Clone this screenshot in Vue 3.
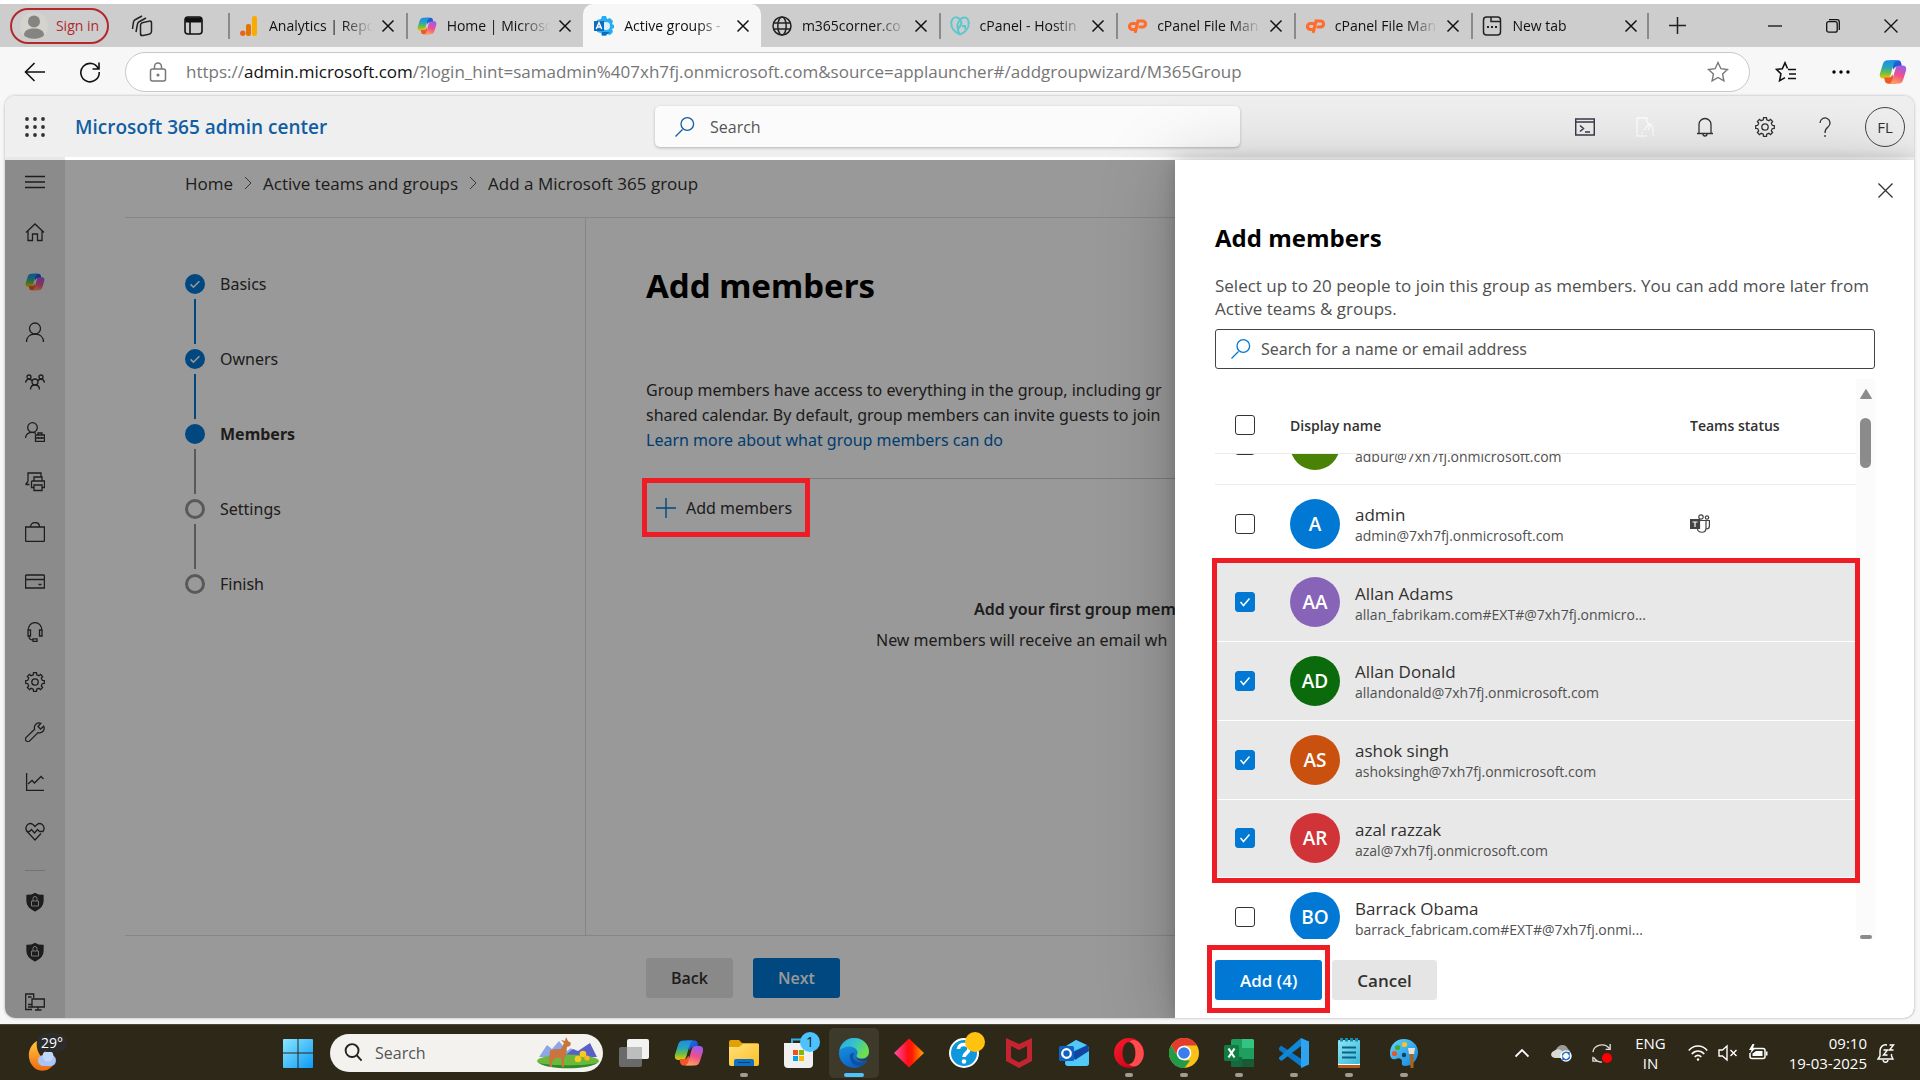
<script setup>
import { ref, onMounted } from 'vue'

const tabs = [
  { title: 'Analytics | Repo', icon: 'analytics' },
  { title: 'Home | Microso', icon: 'copilot' },
  { title: 'Active groups -', icon: 'admin', active: true },
  { title: 'm365corner.co', icon: 'globe' },
  { title: 'cPanel - Hostin', icon: 'godaddy' },
  { title: 'cPanel File Man', icon: 'cpanel' },
  { title: 'cPanel File Man', icon: 'cpanel' },
  { title: 'New tab', icon: 'newtab' }
]

// outline of a cog, drawn tooth by tooth in a 20x20 box
function gearPath(teeth, outer, inner) {
  const points = []
  const step = (Math.PI * 2) / teeth
  for (let i = 0; i < teeth; i++) {
    const a = i * step
    const corners = [[-0.3, inner], [-0.2, outer], [0.2, outer], [0.3, inner]]
    corners.forEach(([offset, r]) => {
      const t = a + offset * step
      points.push((10 + r * Math.sin(t)).toFixed(2) + ' ' + (10 - r * Math.cos(t)).toFixed(2))
    })
  }
  return 'M' + points.join('L') + 'Z'
}

const gear = `<path d="${gearPath(8, 9.4, 7.4)}"/><circle cx="10" cy="10" r="3.2"/>`
const shield = '<path fill="currentColor" d="M10 1.5C12 3 15 3.500 18 3.500V9c0 4.500-3 7.500-8 9.800C5 16.500 2 13.500 2 9V3.500C5 3.500 8 3 10 1.500Z"/><path stroke="#c8c8c8" stroke-width="1" d="M6.500 9h7v5h-7zM8 9V6.500a2 2 0 0 1 4 0V9"/>'

const navItems = [
  { name: 'Menu', svg: '<path d="M0 4.500h20M0 10h20M0 15.500h20"/>' },
  { name: 'Home', svg: '<path d="M1 10.500 10 2l9 8.500M3 9v9.500h4.500V12h5v6.500H17V9"/>' },
  { name: 'Copilot', svg: '<use href="#ic-copilot" width="20" height="20" stroke="none"/>' },
  { name: 'Users', svg: '<circle cx="10" cy="6.500" r="5.500"/><path d="M1.500 20c0-5 3.500-8 8.500-8s8.500 3 8.500 8"/>' },
  { name: 'Teams and groups', svg: '<circle cx="4" cy="5" r="2"/><circle cx="16" cy="5" r="2"/><circle cx="10" cy="10" r="3"/><path d="M.500 10.500C1 8.500 2 7 4 7c1.500 0 2.500 1 3 2M19.500 10.500C19 8.500 18 7 16 7c-1.500 0-2.500 1-3 2M5.500 17.500c0-3 2-4.500 4.500-4.500s4.500 1.500 4.500 4.500"/>' },
  { name: 'Roles', svg: '<circle cx="7.500" cy="5.500" r="4.800"/><path d="M.500 16c.300-3.500 3-5.700 7-5.700 1.500 0 2.500.500 3.500 1M10.500 13h9v6.500h-9zM13 13v-2h4v2M10.500 16h9M13.500 15v2M16.500 15v2"/>' },
  { name: 'Resources', svg: '<path d="M3 9.500V1h13v4M.500 12.500h4M.500 12.500 3 9.500M9 9V5h8v4M6.500 9h13v6.500h-2.500M6.500 9v6.500H9M9 13h8v5.500H9z"/>' },
  { name: 'Marketplace', svg: '<path d="M.600 5h18.800v13.500a1 1 0 0 1-1 1H1.600a1 1 0 0 1-1-1zM5.500 5C5.500-1 14.500-1 14.500 5"/>' },
  { name: 'Billing', svg: '<path d="M.600 4a1 1 0 0 1 1-1h16.800a1 1 0 0 1 1 1v12H.600zM.600 7.500h18.800M13.500 12.500h3"/>' },
  { name: 'Support', svg: '<path d="M3 9c0-5 3-8.400 7-8.400S17 4 17 9M3 8h2.500v6H3zM14.500 8H17v6h-2.500zM4 14c0 3 1.500 4 4 4M8 16.800h4v2.600H8z"/>' },
  { name: 'Settings', svg: gear },
  { name: 'Setup', svg: '<path d="M18.700 4.200 15.500 7l-2.500-2.500L15.800 1.300C12 0 8.500 3 9.600 7.200L1.200 15.400a2.400 2.400 0 0 0 3.500 3.500l8.300-8.300c4.200 1 7.300-2.600 5.700-6.400Z"/>' },
  { name: 'Reports', svg: '<path d="M1.600 1v17.400H19M3 12l4-3.500 2.500 2.500 6.500-6.500 2.500 2.500"/>' },
  { name: 'Health', svg: '<path d="M2 9.500C-1 5 3.500-.500 8 2.500l2 2 2-2c4.500-3 9 2.500 6 7h-3.500l-2-2-3 3.500-3-3.500-2 2H2l8 8.500 6-6.500"/>' },
  { name: 'Security', svg: shield, separated: true },
  { name: 'Compliance', svg: shield },
  { name: 'Endpoint Manager', svg: '<path d="M7 17.500H.700V2h8v4M3 5h3.500M3 12.500h4M3 15h4M7 7h12.300v8H7zM10 18h6.500M13 15v3"/>' }
]

const steps = [
  { label: 'Basics', state: 'done' },
  { label: 'Owners', state: 'done' },
  { label: 'Members', state: 'current' },
  { label: 'Settings', state: 'todo' },
  { label: 'Finish', state: 'todo' }
]

const groups = ref([
  {
    people: [
      { id: 'adbur', initials: '', name: '', email: 'adbur@7xh7fj.onmicrosoft.com', color: 'green', checked: false },
      { id: 'admin', initials: 'A', name: 'admin', email: 'admin@7xh7fj.onmicrosoft.com', color: 'blue', checked: false, teams: true }
    ]
  },
  {
    marked: true,
    people: [
      { id: 'aa', initials: 'AA', name: 'Allan Adams', email: 'allan_fabrikam.com#EXT#@7xh7fj.onmicro...', color: 'purple', checked: true },
      { id: 'ad', initials: 'AD', name: 'Allan Donald', email: 'allandonald@7xh7fj.onmicrosoft.com', color: 'forest', checked: true },
      { id: 'as', initials: 'AS', name: 'ashok singh', email: 'ashoksingh@7xh7fj.onmicrosoft.com', color: 'orange', checked: true },
      { id: 'ar', initials: 'AR', name: 'azal razzak', email: 'azal@7xh7fj.onmicrosoft.com', color: 'red', checked: true }
    ]
  },
  {
    people: [
      { id: 'bo', initials: 'BO', name: 'Barrack Obama', email: 'barrack_fabricam.com#EXT#@7xh7fj.onmi...', color: 'blue', checked: false }
    ]
  }
])

const apps = [
  { name: 'Task view', icon: 'taskview' },
  { name: 'Copilot', icon: 'copilot' },
  { name: 'File Explorer', icon: 'folder', running: true },
  { name: 'Microsoft Store', icon: 'store', badge: '1' },
  { name: 'Edge', icon: 'edge', active: true },
  { name: 'Anydesk', icon: 'diamond' },
  { name: 'Get Help', icon: 'help', dot: true },
  { name: 'McAfee', icon: 'mcafee' },
  { name: 'Outlook', icon: 'outlook' },
  { name: 'Opera', icon: 'opera', running: true },
  { name: 'Chrome', icon: 'chrome', running: true },
  { name: 'Excel', icon: 'excel', running: true },
  { name: 'VS Code', icon: 'vscode', running: true },
  { name: 'Notepad', icon: 'notepad', running: true },
  { name: 'Paint', icon: 'paint', running: true }
]

const scroller = ref(null)

onMounted(() => {
  scroller.value.scrollTop = 48
})
</script>

<template>
  <svg class="sprite" aria-hidden="true">
    <defs>
      <linearGradient id="g-cop1" x1="0" y1="0" x2="0" y2="1">
        <stop offset="0" stop-color="#1a8fe8" /><stop offset=".4" stop-color="#2aa5b5" /><stop offset=".7" stop-color="#6fbf3f" /><stop offset="1" stop-color="#f5c400" />
      </linearGradient>
      <linearGradient id="g-cop2" x1=".6" y1="0" x2=".3" y2="1">
        <stop offset="0" stop-color="#9a5cf0" /><stop offset=".5" stop-color="#ee4f8c" /><stop offset="1" stop-color="#ffa15c" />
      </linearGradient>
      <linearGradient id="g-cop3" x1="0" y1="0" x2="1" y2="1">
        <stop offset="0" stop-color="#1f7be8" /><stop offset="1" stop-color="#1c3fc4" />
      </linearGradient>
      <linearGradient id="g-win" x1="0" y1="0" x2="1" y2="1">
        <stop offset="0" stop-color="#8be6ff" /><stop offset="1" stop-color="#0c9bf5" />
      </linearGradient>
      <linearGradient id="g-moon" x1="0" y1="0" x2="0" y2="1">
        <stop offset="0" stop-color="#ffc93c" /><stop offset="1" stop-color="#ee6a12" />
      </linearGradient>
      <linearGradient id="g-fold" x1="0" y1="0" x2="1" y2="1">
        <stop offset="0" stop-color="#ffe07a" /><stop offset="1" stop-color="#fdbf26" />
      </linearGradient>
      <linearGradient id="g-edge" x1="0" y1="0" x2="1" y2=".5">
        <stop offset="0" stop-color="#2aa6e8" /><stop offset=".5" stop-color="#35c3c9" /><stop offset="1" stop-color="#6fe04a" />
      </linearGradient>
      <linearGradient id="g-edge2" x1="0" y1="0" x2=".4" y2="1">
        <stop offset="0" stop-color="#1aa0e8" /><stop offset="1" stop-color="#0c62c4" />
      </linearGradient>
      <linearGradient id="g-dia">
        <stop offset="0" stop-color="#ff4fb0" /><stop offset=".45" stop-color="#ff0f1c" /><stop offset=".6" stop-color="#ff1a00" /><stop offset="1" stop-color="#ffa800" />
      </linearGradient>
      <linearGradient id="g-note" x1="0" y1="0" x2="1" y2="1">
        <stop offset="0" stop-color="#8fe4f5" /><stop offset="1" stop-color="#3bb8d8" />
      </linearGradient>
      <linearGradient id="g-paint" x1="0" y1="0" x2="1" y2="1">
        <stop offset="0" stop-color="#63d3ff" /><stop offset="1" stop-color="#1184dc" />
      </linearGradient>
      <linearGradient id="g-opera" x1="0" y1="0" x2="1" y2="1">
        <stop offset="0" stop-color="#ff1b2d" /><stop offset="1" stop-color="#b80012" />
      </linearGradient>
    </defs>

    <symbol id="ic-copilot" viewBox="0 0 30 30">
      <path fill="url(#g-cop3)" d="M12 2.500h8.500c2 0 2.800 1.300 3.300 3L24.500 9H20c-2.500 0-3.500 1-4.300 3.500Z" />
      <path fill="url(#g-cop1)" d="M9.500 2.500H19c-2 .500-2.700 2-3.400 4.500L12.500 18c-.800 2.800-2 4-4.500 4H4.500C1 22 .300 19 1.200 16L4 7c1-3.200 2.500-4.500 5.500-4.500Z" />
      <path fill="#f0582c" d="M18 27.500H9.500c-2 0-2.800-1.300-3.300-3L5.500 21H10c2.500 0 3.500-1 4.300-3.500Z" />
      <path fill="url(#g-cop2)" d="M20.500 27.500H11c2-.500 2.700-2 3.400-4.500L17.500 12c.800-2.800 2-4 4.500-4h3.500C29 8 29.700 11 28.800 14L26 23c-1 3.200-2.500 4.500-5.500 4.500Z" />
    </symbol>
    <symbol id="ic-analytics" viewBox="0 0 18 20">
      <rect x="12" width="5" height="20" rx="2" fill="#f9ab00" /><rect x="6" y="8" width="5" height="12" rx="2" fill="#e37400" /><circle cx="2.800" cy="17.200" r="2.700" fill="#e8661c" />
    </symbol>
    <symbol id="ic-admin" viewBox="0 0 20 20">
      <path fill="#27aef0" d="M8 0h4l1 3 3-1 3 3-1 3 2 1v3l-2 1 1 3-3 3-3-1-1 2H8l-1-3-4-1V4l4-1Z" />
      <circle cx="12" cy="10" r="4" fill="#d8f2ff" />
      <path fill="#0f6cbd" d="M8 16h8l-4 3H8zM0 5h10v10H0z" />
      <path fill="none" stroke="#fff" stroke-width="1.400" d="m2.300 13 2.700-6.500L7.700 13M3.300 11h3.400" />
    </symbol>
    <symbol id="ic-globe" viewBox="0 0 20 20">
      <g fill="none" stroke="#222" stroke-width="1.500"><circle cx="10" cy="10" r="9" /><ellipse cx="10" cy="10" rx="4.200" ry="9" /><path d="M1.500 7h17M1.500 13h17" /></g>
    </symbol>
    <symbol id="ic-godaddy" viewBox="0 0 20 20">
      <g fill="none" stroke="#5cc8cd" stroke-width="2"><path d="M10 18.500C4 16 .500 11 1.500 5.500 2.500 0 8 .500 10.500 4c2 3-.500 7-2.500 9M10 18.500c6-2.500 9.500-7.500 8.500-13C17.500 0 12 .500 9 5c-3 5-2 9 1 13.500M12 10h3v3" /></g>
    </symbol>
    <symbol id="ic-cpanel" viewBox="0 0 20 14">
      <g fill="none" stroke="#ff6c2c" stroke-width="3.200" stroke-linecap="round"><path d="M8 4.500H5.500a3 3 0 0 0 0 6H7M8.500 12.500 11 2h4.500a3 3 0 0 1 0 6H13" /></g>
    </symbol>
    <symbol id="ic-newtab" viewBox="0 0 20 20">
      <g fill="none" stroke="#222" stroke-width="1.500"><rect x="1.500" y="1" width="17" height="18" rx="3" /><path d="M9 1v4.500h9" /></g>
      <path fill="#222" d="M5 10h2v2H5zM9 10h2v2H9zM13 10h2v2h-2z" />
    </symbol>

    <symbol id="ic-taskview" viewBox="0 0 30 30">
      <rect x="0" y="9" width="23" height="20" rx="2" fill="#6a6a6a" /><rect x="8" y="1" width="22" height="20" rx="2" fill="#f2f2f2" /><path fill="#bdbdbd" d="M8 9h15v12H8z" />
    </symbol>
    <symbol id="ic-folder" viewBox="0 0 30 30">
      <path fill="#e0a106" d="M0 4a2 2 0 0 1 2-2h8l3 3h15a2 2 0 0 1 2 2v6H0z" /><path fill="url(#g-fold)" d="M0 9h10l4-3h16v20a2 2 0 0 1-2 2H2a2 2 0 0 1-2-2z" />
      <path fill="#0f6fc0" d="M5 28v-5a2 2 0 0 1 2-2h16a2 2 0 0 1 2 2v5z" /><path stroke="#0a3f78" d="M9 24.500h12" />
    </symbol>
    <symbol id="ic-store" viewBox="0 0 30 30">
      <path fill="none" stroke="#2ab4ee" stroke-width="2" d="M8 7V1.500h13V7" /><path fill="#f0f0f0" d="M0 5h29v21a4 4 0 0 1-4 4H4a4 4 0 0 1-4-4z" />
      <path fill="#f25022" d="M9 12h5v5H9z" /><path fill="#7fba00" d="M15 12h5v5h-5z" /><path fill="#00a4ef" d="M9 18h5v5H9z" /><path fill="#ffb900" d="M15 18h5v5h-5z" />
    </symbol>
    <symbol id="ic-edge" viewBox="0 0 30 30">
      <circle cx="15" cy="15" r="15" fill="url(#g-edge2)" />
      <path fill="url(#g-edge)" d="M.500 12C2 5 8 0 15 0c8.500 0 15 6 15 13.500 0 4-3 7-7 7-3 0-5.500-1-5.500-2.500 0-1 1-1.500 1-3.500 0-3.500-4-6-8-6-4 0-8 2-10 3.500Z" />
      <path fill="#0e4f9e" d="M11 17c-1 7 5 12 11 11 2-.500 5-3 6-5-6 3-14 1-14-4.500 0-2 1-3 1.500-3.500-2 0-4 .500-4.500 2Z" />
      <path fill="#3d392b" d="M30 17c-1.500 3-4 4.500-7.500 4.500-3.500 0-5.500-1.500-5.500-3.500 0 4 5 6.500 11 4.500l2-1ZM29 22.500l1 1V30h-7c3-1 5-4 6-7.500Z" />
    </symbol>
    <symbol id="ic-diamond" viewBox="0 0 30 30"><path fill="url(#g-dia)" d="M15 0.500 30 15 15 29.500 0 15Z" /></symbol>
    <symbol id="ic-help" viewBox="0 0 30 30">
      <circle cx="15" cy="15" r="14" fill="#0e97dc" stroke="#fff" stroke-width="2" />
      <path fill="none" stroke="#fff" stroke-width="3.600" d="M9.500 11c0-6 10.500-6 10.500 0 0 4-5 4-5 8" /><circle cx="15" cy="23.500" r="2.300" fill="#fff" />
    </symbol>
    <symbol id="ic-mcafee" viewBox="0 0 30 30"><path fill="#c42430" fill-rule="evenodd" d="M2 0 15 6 28 0v23l-13 7-13-7zM7 8v12l8 4.500 8-4.500V8l-8 4z" /></symbol>
    <symbol id="ic-outlook" viewBox="0 0 30 30">
      <path fill="#1a86dc" d="M6 9 17 2l13 7v16a3 3 0 0 1-3 3H9a3 3 0 0 1-3-3z" /><path fill="#51c8f7" d="M17 2 7 8l6 6 15-7zM6 24l24-12v13a3 3 0 0 1-3 3H9c-2 0-3-2-3-4z" /><path fill="#1146a0" d="m12 15 17-8 1 6-14 9z" />
      <rect y="8" width="15" height="15" rx="1.500" fill="#0f62c0" /><circle cx="7.500" cy="15.500" r="4.300" fill="none" stroke="#fff" stroke-width="2.200" />
    </symbol>
    <symbol id="ic-opera" viewBox="0 0 30 30">
      <path fill="url(#g-opera)" fill-rule="evenodd" d="M15 0a15 15 0 1 0 0 30 15 15 0 0 0 0-30ZM15 4c4 0 6.500 5 6.500 11S19 26 15 26 8.500 21 8.500 15 11 4 15 4Z" />
      <path fill="#ff4b4b" d="M15 4c3-3 6-2.500 9-.500 7 6 8 16 1 23-3 2.500-7 3-10-.500 4 0 6.500-5 6.500-11S19 4 15 4Z" />
    </symbol>
    <symbol id="ic-chrome" viewBox="0 0 30 30">
      <circle cx="15" cy="15" r="15" fill="#fbc116" /><path fill="#e33b2e" d="M2 7.500A15 15 0 0 1 28 7.500H15L9 18Z" /><path fill="#23994a" d="M2 7.500 9 18.500 15 22.500h6L15.500 30A15 15 0 0 1 2 7.500Z" />
      <circle cx="15" cy="15" r="7.300" fill="#fff" /><circle cx="15" cy="15" r="5.800" fill="#3b7ded" />
    </symbol>
    <symbol id="ic-excel" viewBox="0 0 30 30">
      <rect x="7" y="1" width="23" height="28" rx="2" fill="#1f9f5e" /><path fill="#34c481" d="M18 1h10a2 2 0 0 1 2 2v7H18z" /><path fill="#15693c" d="M7 19h11v10H9a2 2 0 0 1-2-2z" /><path fill="#185c37" d="M18 21h12v6a2 2 0 0 1-2 2H18z" />
      <rect y="7" width="15" height="16" rx="1.500" fill="#107c41" /><path stroke="#fff" stroke-width="2.200" d="m4.500 10.500 6 9M10.500 10.500l-6 9" />
    </symbol>
    <symbol id="ic-vscode" viewBox="0 0 30 30">
      <path fill="#0b78c8" d="M0 10 2 7.500 24 22v8L0 12z" /><path fill="#1187d8" d="M0 19.500 22 0v8L2.500 23 0 21z" /><path fill="#2ea3f2" d="M22 0 30 3.500v23L22 30z" />
    </symbol>
    <symbol id="ic-notepad" viewBox="0 0 30 30">
      <rect x="4" y="24" width="22" height="6" rx="1" fill="#b5591c" /><path fill="#fff" d="M4 24h22v3H4z" /><rect x="4" y="2" width="22" height="24" rx="1" fill="url(#g-note)" /><path stroke="#0b6286" stroke-width="2" d="M8 9.500h14M8 14.500h14M8 19.500h14" />
      <path fill="#0f8fb4" d="M6 0h3v3.500H6zM11 0h3v3.500h-3zM16 0h3v3.500h-3zM21 0h3v3.500h-3z" />
    </symbol>
    <symbol id="ic-paint" viewBox="0 0 30 30">
      <path fill="url(#g-paint)" d="M15 1c8 0 14 6 14 13 0 8-6 14-13 14-4 0-3-3-3-5s-3-4-6-2c-3 1-6 0-6-6C1 7 7 1 15 1Z" />
      <circle cx="5.500" cy="15.500" r="2.600" fill="#e5562a" /><circle cx="8.500" cy="9.500" r="2.600" fill="#3fae29" /><circle cx="15.500" cy="6.500" r="2.600" fill="#f7c51e" /><circle cx="15" cy="17" r="2.200" fill="#12405e" />
      <path fill="#e9e2d2" d="M19 10h7l-1 6h-5z" /><path fill="#a9641a" d="M20.500 16h4v14h-3z" />
    </symbol>
    <symbol id="ic-search" viewBox="0 0 20 20"><path fill="none" stroke="currentColor" stroke-width="1.300" d="M7.500 12.500.500 19.500M6 7a6.300 6.300 0 1 1 12.600 0A6.300 6.300 0 1 1 6 7Z" /></symbol>
    <symbol id="ic-close" viewBox="0 0 16 16"><path fill="none" stroke="currentColor" stroke-width="1.500" d="m2.500 2.500 11 11m0-11-11 11" /></symbol>
  </svg>

  <div class="desktop">
    <div class="tab-strip">
      <button class="sign-in">
        <svg viewBox="0 0 28 28"><circle cx="14" cy="14" r="14" fill="#d5d3ce" /><circle cx="14" cy="9.500" r="6" fill="#868480" /><path fill="#868480" d="M4 23c0-5 5-6.500 10-6.500S24 18 24 23c-3 5-17 5-20 0Z" /></svg>
        Sign in
      </button>
      <button class="strip-btn" aria-label="Workspaces">
        <svg viewBox="0 0 22 22" fill="none" stroke="#222" stroke-width="1.500"><path d="M1.500 14 2.500 7c.200-1 1-2 2-2.500L11 1M5 17 6.500 9c.200-1 1-2 2-2.500L15 3" /><rect x="9.500" y="6" width="11" height="13" rx="2.500" transform="skewY(-12) translate(0 4)" /></svg>
      </button>
      <button class="strip-btn" aria-label="Tab actions">
        <svg viewBox="0 0 22 22" fill="none" stroke="#111" stroke-width="1.600"><rect x="2" y="2" width="17" height="17" rx="3" /><path d="M2.500 5h16" stroke-width="5" /><path d="M7 7v12" /></svg>
      </button>
      <div class="tabs">
        <div v-for="(tab, index) in tabs" :key="index" :class="['tab', { active: tab.active }]">
          <svg class="tab-icon"><use :href="'#ic-' + tab.icon" /></svg>
          <span class="tab-title">{{ tab.title }}</span>
          <button class="tab-close" aria-label="Close tab"><svg><use href="#ic-close" /></svg></button>
        </div>
      </div>
      <button class="new-tab" aria-label="New tab">
        <svg viewBox="0 0 18 18" stroke="#222" stroke-width="1.600"><path d="M9 0v18M0 9h18" /></svg>
      </button>
      <div class="window-controls">
        <button aria-label="Minimize"><svg viewBox="0 0 14 14" stroke="#111" stroke-width="1.300"><path d="M0 7h14" /></svg></button>
        <button aria-label="Restore"><svg viewBox="0 0 14 14" fill="none" stroke="#111" stroke-width="1.300"><rect x=".700" y="2.700" width="10.500" height="10.500" rx="2" /><path d="M3 .700h8a2.300 2.300 0 0 1 2.300 2.300v8" /></svg></button>
        <button aria-label="Close"><svg viewBox="0 0 14 14" stroke="#111" stroke-width="1.300"><path d="m.500.500 13 13m0-13-13 13" /></svg></button>
      </div>
    </div>

    <div class="toolbar">
      <button aria-label="Back"><svg viewBox="0 0 22 22" fill="none" stroke="#111" stroke-width="1.600"><path d="M21 11H2M10.500 2 1.500 11l9 9" /></svg></button>
      <button aria-label="Refresh"><svg viewBox="0 0 22 22" fill="none" stroke="#111" stroke-width="1.600"><path d="M19.500 8A9.200 9.200 0 1 0 20.200 11M20 1.500v6.500h-6.500" /></svg></button>
      <div class="address">
        <svg viewBox="0 0 18 20" fill="none" stroke="#777" stroke-width="1.500"><rect x="1.500" y="7" width="15" height="12" rx="2" /><path d="M5.500 7V4.500a3.500 3.500 0 0 1 7 0V7" /><circle cx="9" cy="13" r=".800" fill="#777" /></svg>
        <span class="url">https://<b>admin.microsoft.com</b>/?login_hint=samadmin%407xh7fj.onmicrosoft.com&amp;source=applauncher#/addgroupwizard/M365Group</span>
        <svg class="star" viewBox="0 0 22 22" fill="none" stroke="#777" stroke-width="1.400"><path d="m11 1.500 2.900 6.200 6.600.800-4.900 4.600 1.300 6.700L11 16.500l-5.900 3.300 1.300-6.700L1.500 8.500l6.600-.800Z" /></svg>
      </div>
      <button class="tool" aria-label="Favorites"><svg viewBox="0 0 22 22" fill="none" stroke="#111" stroke-width="1.600"><path d="M12.500 7.500 10 1.800 7.300 7.800 1.500 8.300l4.400 4.500-1.300 6.800 5.400-3M13 8.500h8M14 13h7M13 17.500h8" /></svg></button>
      <button class="tool" aria-label="More"><svg viewBox="0 0 22 22"><circle cx="4" cy="11" r="1.700" /><circle cx="11" cy="11" r="1.700" /><circle cx="18" cy="11" r="1.700" /></svg></button>
      <button class="tool-copilot" aria-label="Copilot"><svg><use href="#ic-copilot" /></svg></button>
    </div>

    <div class="site">
      <header class="suite-bar">
        <button class="waffle" aria-label="App launcher">
          <svg viewBox="0 0 20 20" fill="#333"><g v-for="row in 3" :key="row"><circle v-for="col in 3" :key="col" :cx="col * 8 - 6" :cy="row * 8 - 6" r="1.900" /></g></svg>
        </button>
        <a class="brand" href="#">Microsoft 365 admin center</a>
        <label class="suite-search">
          <svg><use href="#ic-search" /></svg>
          <input type="text" placeholder="Search" aria-label="Search">
        </label>
        <div class="suite-icons">
          <button aria-label="Cloud shell"><svg viewBox="0 0 20 20" fill="none" stroke="#3b3a4a" stroke-width="1.500"><path d="M.700 2h18.600v16H.700zM.700 5h18.600M5 8.500l3.500 3L5 14.500M10 15h5" /></svg></button>
          <button aria-label="Mobile"><svg viewBox="0 0 20 20" fill="none" stroke="#fff" stroke-width="1.300"><path d="M12 6V1H2v18h10M6 16h2M12 6c4 0 6 4 6 7v6M9 13l5-6 1 2-2 4" /></svg></button>
          <button aria-label="Notifications"><svg viewBox="0 0 20 20" fill="none" stroke="#333" stroke-width="1.300"><path d="M4 16V7.500a6 6 0 0 1 12 0V16M2 16.500h16M8 17a2 2 0 0 0 4 0" /></svg></button>
          <button aria-label="Settings"><svg viewBox="0 0 20 20" fill="none" stroke="#333" stroke-width="1.300" v-html="gear"></svg></button>
          <button aria-label="Help"><svg viewBox="0 0 20 20" fill="none" stroke="#333" stroke-width="1.300"><path d="M5 6a5 5 0 1 1 8 4c-2 1.500-3 2.500-3 6" /><path d="M10 18v2" /></svg></button>
          <button class="me" aria-label="Account">FL</button>
        </div>
      </header>

      <div class="page">
        <nav class="side-nav">
          <template v-for="item in navItems" :key="item.name">
            <div v-if="item.separated" class="nav-separator"></div>
            <a href="#" :aria-label="item.name"><svg viewBox="0 0 20 20" fill="none" stroke="currentColor" stroke-width="1.300" v-html="item.svg"></svg></a>
          </template>
        </nav>

        <main class="wizard">
          <div class="crumbs">
            <a href="#">Home</a>
            <svg viewBox="0 0 8 14"><path d="m1 1 6 6-6 6" /></svg>
            <a href="#">Active teams and groups</a>
            <svg viewBox="0 0 8 14"><path d="m1 1 6 6-6 6" /></svg>
            <a href="#">Add a Microsoft 365 group</a>
          </div>
          <div class="wizard-body">
            <ol class="steps">
              <li v-for="step in steps" :key="step.label" :class="step.state">
                <span class="bullet"><svg v-if="step.state === 'done'" viewBox="0 0 20 20"><path d="m4.500 10.500 3.500 3.500 7.500-7.500" /></svg></span>
                {{ step.label }}
              </li>
            </ol>
            <section class="content">
              <h1>Add members</h1>
              <p class="intro">
                Group members have access to everything in the group, including gr<br>
                shared calendar. By default, group members can invite guests to join<br>
                <a href="#">Learn more about what group members can do</a>
              </p>
              <div class="command-bar">
                <button class="add-command marked">
                  <svg viewBox="0 0 20 20"><path d="M10 0v20M0 10h20" /></svg>
                  Add members
                </button>
              </div>
              <div class="empty">
                <strong>Add your first group mem</strong>
                <span>New members will receive an email wh</span>
              </div>
            </section>
          </div>
          <div class="wizard-footer">
            <button>Back</button>
            <button class="primary">Next</button>
          </div>
        </main>
        <div class="overlay"></div>

        <aside class="panel">
          <button class="panel-close" aria-label="Close panel"><svg viewBox="0 0 16 16"><path d="m.500.500 15 15m0-15-15 15" /></svg></button>
          <h2>Add members</h2>
          <p>Select up to 20 people to join this group as members. You can add more later from Active teams &amp; groups.</p>
          <label class="people-search">
            <svg><use href="#ic-search" /></svg>
            <input type="text" placeholder="Search for a name or email address" aria-label="Search for a name or email address">
          </label>
          <div class="list">
            <div class="rail">
              <svg viewBox="0 0 12 10"><path d="M6 0.500 11.500 9.500H.500Z" stroke="#8b8b8b" stroke-linejoin="round" /></svg>
              <div class="thumb"></div>
              <div class="rail-end"></div>
            </div>
            <div ref="scroller" class="scroller">
              <table>
                <thead>
                  <tr>
                    <th class="col-check"><input type="checkbox" aria-label="Select all"></th>
                    <th class="col-name">Display name</th>
                    <th>Teams status</th>
                  </tr>
                </thead>
                <tbody v-for="(group, index) in groups" :key="index" :class="{ marked: group.marked }">
                  <tr v-for="person in group.people" :key="person.id" :class="{ selected: person.checked }">
                    <td class="col-check"><input v-model="person.checked" type="checkbox" :aria-label="person.email"></td>
                    <td>
                      <div class="person">
                        <span :class="['avatar', person.color]">{{ person.initials }}</span>
                        <div>
                          <div class="name">{{ person.name }}</div>
                          <div class="email">{{ person.email }}</div>
                        </div>
                      </div>
                    </td>
                    <td>
                      <svg v-if="person.teams" class="teams" viewBox="0 0 20 20" fill="none" stroke="#444" stroke-width="1.200"><circle cx="11" cy="3" r="2.200" /><circle cx="17" cy="3.500" r="1.700" /><path d="M10 6.500h6V14c0 6-8 5-8.500 1M16 6.500h3.400V12c0 2-1.500 3-3 3" /><path fill="#444" d="M.500 5.500h9v9h-9z" /><path stroke="#fff" d="M2.500 8h5M5 8v5" /></svg>
                    </td>
                  </tr>
                </tbody>
              </table>
            </div>
          </div>
          <div class="panel-footer">
            <button class="add marked">Add (4)</button>
            <button>Cancel</button>
          </div>
        </aside>
      </div>
    </div>

    <footer class="taskbar">
      <div class="weather">
        <svg viewBox="0 0 40 44">
          <path fill="url(#g-moon)" d="M9 10C-3 17-1 34 10 39c6 2 13 0 16-7C14 31 7 20 9 10Z" />
          <rect x="10" y="24" width="18" height="11" rx="5.500" fill="#a9c4f5" /><circle cx="20" cy="25" r="5.500" fill="#c3d6fb" />
        </svg>
        <span>29°</span>
      </div>
      <button class="start" aria-label="Start"><svg viewBox="0 0 30 30" fill="url(#g-win)"><path d="M0 2a1 1 0 0 1 1-1h13.500v13.500H0zM15.500 1H29a1 1 0 0 1 1 1v12.500H15.500zM0 15.500h14.500V30H1a1 1 0 0 1-1-1zM15.500 15.500H30V29a1 1 0 0 1-1 1H15.500z" /></svg></button>
      <label class="task-search">
        <svg viewBox="0 0 20 20" fill="none" stroke="#222" stroke-width="2"><circle cx="8.500" cy="8" r="6.800" /><path d="m13.500 13 5 5.500" /></svg>
        <input type="text" placeholder="Search" aria-label="Taskbar search">
        <svg class="scene" viewBox="0 0 62 32">
          <path fill="#8ea6e6" d="M2 20 10 8l5 4 7-8 8 10 4-3 8 9z" /><path fill="#5a5fc8" d="M26 20 36 12l5 2 12-8 7 14z" />
          <ellipse cx="31" cy="24" rx="31" ry="6.500" fill="#6cb83a" /><path fill="#2f8a2a" d="M2 26c8 7 50 7 58 0-10 3-48 3-58 0Z" />
          <path fill="#c9753f" d="M13 14c2-2 8-2 11-2l3-6-3-3 4 1 1-4 2 4 3 2-1 3-3 1-1 8-2 3v9h-2l-1-9h-5l-4 4v5h-2l-1-8Z" />
          <circle cx="46" cy="17" r="3.300" fill="#f9cb1e" /><circle cx="41" cy="22" r="3.300" fill="#f9cb1e" /><circle cx="50" cy="21" r="2.600" fill="#ffb51e" />
        </svg>
      </label>
      <div class="apps">
        <button v-for="app in apps" :key="app.name" :class="['app', { running: app.running, active: app.active }]" :aria-label="app.name">
          <svg><use :href="'#ic-' + app.icon" /></svg>
          <span v-if="app.badge || app.dot" class="badge">{{ app.badge }}</span>
        </button>
      </div>
      <div class="tray">
        <svg class="w14" viewBox="0 0 14 14" fill="none" stroke="#fff" stroke-width="1.800"><path d="m.500 10.500 6.500-6.500 6.500 6.500" /></svg>
        <svg class="w22" viewBox="0 0 22 18"><path fill="#9b9b97" d="M5 6C7 0 15-1 17 5c2 1 3 3 2 6H5z" /><path fill="#d9d9d5" d="M3 7c3-3 8-2 9 2 3 0 4 4 1 5H4C-1 14-1 8 3 7Z" /><circle cx="15" cy="12" r="5.700" fill="#fff" /><path fill="none" stroke="#1a6fd0" stroke-width="1.500" d="M11.500 11.500a3.500 3.500 0 0 1 6.500-1.500V8M18.500 12.500A3.500 3.500 0 0 1 12 14v2" /></svg>
        <svg class="w22" viewBox="0 0 22 22" fill="none" stroke="#ddd" stroke-width="1.500"><path d="M1 10C2 2 14-1 19 6M20 1v6h-5M6 20H1v-5M2 16c2 3 5 5 9 5" /><circle cx="16.500" cy="16.500" r="5.500" fill="#f00" stroke="none" /></svg>
        <div class="lang">ENG<br>IN</div>
        <svg class="w20" viewBox="0 0 20 18" fill="none" stroke="#fff" stroke-width="1.600"><path d="M.800 6.500c5-6 13.400-6 18.400 0M3.800 10c3.500-4 8.900-4 12.400 0M6.700 13c2-2.200 4.600-2.200 6.600 0" /><circle cx="10" cy="15.500" r="1.200" fill="#fff" stroke="none" /></svg>
        <svg class="w20" viewBox="0 0 20 18" fill="none" stroke="#fff" stroke-width="1.400"><path d="M1 6h3.500L9 2v14l-4.500-4H1zM12.500 6l6 6m0-6-6 6" /></svg>
        <svg class="w20" viewBox="0 0 20 18" fill="none" stroke="#fff" stroke-width="1.500"><path d="M5 4.500h10a2 2 0 0 1 2 2v6a2 2 0 0 1-2 2H4a2 2 0 0 1-2-2V9" /><path fill="#fff" stroke="none" d="M8 7h6.500v5H4.500V9.500ZM18 7.500h1.500v4H18zM4.500 0 1 6h2.500L2 10l5.500-6H5L6.500 0z" /></svg>
        <div class="clock">09:10<br>19-03-2025</div>
        <svg class="w18" viewBox="0 0 18 20" fill="none" stroke="#fff" stroke-width="1.400"><path d="M10 2C6 1 3 4 3 8v5l-2 3h15l-1.500-3v-2M6 17c.500 3 4.500 3 5 0M6.500 7h4l-4 5h4M12.500 2h4l-4 5h4" /></svg>
      </div>
    </footer>
  </div>
</template>

<style>
body {
  background: #f7f7f7;
}
</style>

<style scoped>
* {
  box-sizing: border-box;
}

.sprite {
  position: absolute;
  width: 0;
  height: 0;
}

.desktop {
  display: flex;
  flex-direction: column;
  height: 100vh;
  overflow: hidden;
  font-family: "Open Sans", "Noto Sans", sans-serif;
  font-size: 16px;
  color: #323130;
  background: #f7f7f7;
}

button,
input {
  font: inherit;
  color: inherit;
}

button {
  display: flex;
  align-items: center;
  justify-content: center;
  padding: 0;
  border: 0;
  background: none;
}

a {
  color: inherit;
  text-decoration: none;
}

svg {
  flex: none;
  display: block;
}

/* browser chrome */
.tab-strip {
  display: flex;
  align-items: center;
  height: 47px;
  padding-left: 10px;
  border-top: 4px solid #fff;
  background: #cdcdcd;
  color: #111;
}

.sign-in {
  flex: none;
  gap: 8px;
  width: 99px;
  height: 36px;
  border: 2px solid #b3282d;
  border-radius: 18px;
  color: #b3282d;
  font-size: 14px;
  white-space: nowrap;
}

.sign-in svg {
  width: 28px;
  height: 28px;
}

.strip-btn {
  flex: none;
  width: 52px;
}

.sign-in + .strip-btn {
  margin-left: 7px;
}

.strip-btn svg {
  width: 22px;
  height: 22px;
}

.tabs {
  display: flex;
  flex: 0 1 1421px;
  align-self: stretch;
  min-width: 0;
  margin-left: 8px;
}

.tab {
  display: flex;
  flex: 1;
  align-items: center;
  min-width: 0;
  padding: 0 10px 0 11px;
  background: linear-gradient(#8a8a8a, #8a8a8a) left center / 2px 26px no-repeat;
}

.tab:last-child {
  background: linear-gradient(#8a8a8a, #8a8a8a) left center / 2px 26px no-repeat, linear-gradient(#8a8a8a, #8a8a8a) right center / 2px 26px no-repeat;
}

.tab.active {
  border-radius: 10px 10px 0 0;
  background: #f7f7f7;
}

.tab.active + .tab {
  background: none;
}

.tab-icon {
  width: 20px;
  height: 20px;
}

.tab-title {
  flex: 1;
  min-width: 0;
  margin: 0 7px 0 10px;
  font-size: 14px;
  white-space: nowrap;
  mask-image: linear-gradient(to right, #000 calc(100% - 30px), transparent);
}

.tab-close svg {
  width: 16px;
  height: 16px;
}

.new-tab {
  flex: none;
  width: 56px;
}

.new-tab svg {
  width: 17px;
  height: 17px;
}

.window-controls {
  display: flex;
  flex: none;
  margin-left: auto;
}

.window-controls button {
  width: 58px;
  height: 40px;
}

.window-controls svg {
  width: 14px;
  height: 14px;
}

.toolbar {
  display: flex;
  align-items: center;
  height: 49px;
  padding: 0 2px 0 7px;
}

.toolbar > button {
  width: 55px;
  height: 40px;
}

.toolbar button svg {
  width: 22px;
  height: 22px;
}

.address {
  display: flex;
  flex: 1;
  align-items: center;
  height: 40px;
  margin: 0 8px;
  padding: 0 20px 0 23px;
  border: 1px solid #c8c8c8;
  border-radius: 20px;
  background: #fff;
}

.address svg {
  width: 18px;
  height: 20px;
}

.address .star {
  width: 22px;
  height: 22px;
}

.url {
  flex: 1;
  margin-left: 19px;
  color: #767676;
  font-size: 17px;
  white-space: nowrap;
}

.url b {
  color: #111;
  font-weight: 400;
}

.toolbar > .tool-copilot {
  width: 50px;
}

.toolbar .tool-copilot svg {
  width: 28px;
  height: 28px;
}

/* admin center */
.site {
  display: flex;
  flex: 1;
  flex-direction: column;
  min-height: 0;
  margin: 0 6px 6px 5px;
  overflow: hidden;
  border-radius: 10px;
  background: #fff;
  box-shadow: 0 0 3px rgba(0, 0, 0, 0.3);
}

.suite-bar {
  display: grid;
  grid-template-columns: 130fr 117fr 133fr;
  grid-template-areas: "brand search icons";
  align-items: center;
  flex: none;
  height: 61px;
  padding-right: 9px;
  background: #efefef;
}

.waffle {
  grid-area: brand;
  justify-self: start;
  width: 60px;
  height: 48px;
}

.waffle svg {
  width: 20px;
  height: 20px;
}

.brand {
  grid-area: brand;
  margin-left: 70px;
  color: #115ea3;
  font-size: 19px;
  font-weight: 600;
}

.suite-search {
  grid-area: search;
  display: flex;
  align-items: center;
  gap: 15px;
  height: 41px;
  padding: 0 20px;
  border-radius: 5px;
  background: #fbfbfb;
  box-shadow: 0 1px 3px rgba(0, 0, 0, 0.25);
  color: #115ea3;
}

.suite-search svg,
.people-search svg {
  width: 20px;
  height: 20px;
}

input[type="text"] {
  flex: 1;
  min-width: 0;
  padding: 0;
  border: 0;
  outline: 0;
  background: none;
}

input::placeholder {
  color: #555;
  opacity: 1;
}

.suite-icons {
  grid-area: icons;
  display: flex;
  align-items: center;
  justify-content: flex-end;
}

.suite-icons button {
  width: 60px;
  height: 40px;
}

.suite-icons svg {
  width: 20px;
  height: 20px;
}

.suite-icons .me {
  width: 40px;
  margin-left: 10px;
  border: 1px solid #444;
  border-radius: 50%;
  font-size: 15px;
}

.page {
  position: relative;
  display: flex;
  flex: 1;
  min-height: 0;
}

.overlay {
  position: absolute;
  inset: 3px 0 0;
  background: rgba(0, 0, 0, 0.4);
}

.marked {
  position: relative;
}

.marked::after {
  content: "";
  position: absolute;
  z-index: 1;
  border: 5px solid #ee1c25;
}

.side-nav {
  flex: none;
  width: 60px;
  overflow: hidden;
  background: #e8e8e8;
}

.side-nav a {
  display: flex;
  align-items: center;
  justify-content: center;
  height: 50px;
}

.side-nav svg {
  width: 20px;
  height: 20px;
}

.nav-separator {
  height: 1px;
  margin: 13px 20px 6px;
  background: #c0c0c0;
}

.wizard {
  display: flex;
  flex: 1;
  flex-direction: column;
  min-width: 0;
  margin-left: 60px;
  overflow: hidden;
}

.crumbs {
  display: flex;
  align-items: center;
  gap: 11px;
  height: 60px;
  padding: 0 0 8px 60px;
  font-size: 17px;
}

.crumbs svg {
  width: 8px;
  height: 14px;
  fill: none;
  stroke: #605e5c;
}

.wizard-body {
  display: flex;
  flex: 1;
  border: solid #e1dfdd;
  border-width: 1px 0;
}

.steps {
  flex: none;
  width: 461px;
  margin: 0;
  padding: 54px 60px;
  border-right: 1px solid #e1dfdd;
  font-family: "Noto Sans", sans-serif;
  list-style: none;
}

.steps li {
  position: relative;
  display: flex;
  align-items: center;
  gap: 15px;
  height: 24px;
  margin-bottom: 51px;
}

.steps li:not(:last-child)::before {
  content: "";
  position: absolute;
  top: 27px;
  left: 9px;
  width: 2px;
  height: 45px;
  background: #979593;
}

.steps li.done:not(:last-child)::before {
  background: #0078d4;
}

.bullet {
  width: 20px;
  height: 20px;
  border: 2px solid #979593;
  border-radius: 50%;
}

.bullet svg {
  width: 16px;
  height: 16px;
  fill: none;
  stroke: #fff;
  stroke-width: 2;
}

.todo .bullet {
  border-width: 3px;
}

.done .bullet,
.current .bullet {
  border-color: #0078d4;
  background: #0078d4;
}

.current {
  font-weight: 700;
}

.content {
  flex: 1;
  min-width: 0;
  padding: 42px 0 0 60px;
  font-family: "Noto Sans", sans-serif;
  white-space: nowrap;
}

h1 {
  margin: 0;
  color: #000;
  font-size: 33px;
  font-weight: 700;
  line-height: 52px;
}

.intro {
  margin: 66px 0 25px;
  line-height: 25px;
}

.intro a {
  color: #0067b8;
}

.command-bar {
  border-top: 1px solid #d0cecc;
}

.add-command {
  gap: 10px;
  height: 58px;
  padding: 0 12px 0 10px;
}

.add-command svg {
  width: 20px;
  height: 20px;
  stroke: #0078d4;
  stroke-width: 1.4;
}

.add-command::after {
  inset: -1px -6px 0 -4px;
}

.empty {
  display: flex;
  flex-direction: column;
  gap: 6px;
  margin-top: 60px;
  padding-left: 230px;
  line-height: 25px;
}

.empty strong {
  padding-left: 98px;
  font-weight: 600;
}

.wizard-footer {
  display: flex;
  flex: none;
  gap: 20px;
  height: 82px;
  padding: 22px 0 0 521px;
}

.wizard-footer button,
.panel-footer button {
  height: 40px;
  padding: 0 25px;
  border-radius: 3px;
  background: #e5e5e5;
  font-weight: 600;
}

.wizard-footer .primary,
.panel-footer .add {
  background: #0078d4;
  color: #fff;
}

/* flyout */
.panel {
  position: absolute;
  inset: 3px 0 0 auto;
  display: flex;
  flex-direction: column;
  width: 739px;
  padding: 0 39px 18px 40px;
  background: #fff;
  box-shadow: 0 8px 72px rgba(0, 0, 0, 0.22), 0 0 16px rgba(0, 0, 0, 0.18);
}

.panel-close {
  align-self: flex-end;
  width: 40px;
  height: 40px;
  margin: 10px -30px 0 0;
}

.panel-close svg {
  width: 15px;
  height: 15px;
  stroke: #333;
  stroke-width: 1.4;
}

h2 {
  margin: 12px 0;
  color: #000;
  font-size: 24px;
  font-weight: 700;
  line-height: 32px;
}

.panel p {
  margin: 8px 0 9px;
  color: #505050;
  font-size: 17px;
  line-height: 23px;
}

.people-search {
  display: flex;
  align-items: center;
  flex: none;
  gap: 10px;
  height: 40px;
  padding: 0 15px;
  border: 1px solid #444;
  border-radius: 3px;
  color: #0078d4;
  font-family: "Noto Sans", sans-serif;
}

.list {
  position: relative;
  flex: 1;
  min-height: 0;
  margin: 10px 0 21px;
}

.rail {
  position: absolute;
  top: 0;
  right: 0;
  bottom: 0;
  display: flex;
  flex-direction: column;
  align-items: center;
  width: 19px;
  padding-top: 10px;
  background: #fbfbfb;
}

.rail svg {
  width: 12px;
  height: 10px;
  fill: #8b8b8b;
}

.thumb {
  width: 11px;
  height: 50px;
  margin-top: 19px;
  border-radius: 6px;
  background: #8b8b8b;
}

.rail-end {
  width: 12px;
  height: 4px;
  margin-top: auto;
  border-radius: 2px;
  background: #8b8b8b;
}

.scroller {
  position: relative;
  height: 100%;
  margin-left: -8px;
  padding: 0 19px 0 8px;
  overflow: auto;
  scrollbar-width: none;
}

table {
  width: 100%;
  height: 626px;
  border-spacing: 0;
  table-layout: fixed;
}

th,
td {
  padding: 0;
  border-bottom: 1px solid #edebe9;
  text-align: left;
}

th {
  position: sticky;
  top: 0;
  z-index: 2;
  height: 75px;
  padding-top: 18px;
  background: #fff;
  font-size: 14px;
  font-weight: 600;
}

.col-check {
  width: 75px;
  padding-left: 20px;
}

.col-name {
  width: 400px;
}

.selected td {
  border-color: #fff;
  background: #e8e8e8;
}

input[type="checkbox"] {
  display: block;
  width: 20px;
  height: 20px;
  margin: 0;
  appearance: none;
  border: 1px solid #333;
  border-radius: 3px;
  background: #fff;
}

input[type="checkbox"]:checked {
  border-color: #0078d4;
  background: #0078d4 url("data:image/svg+xml,%3Csvg xmlns='http://www.w3.org/2000/svg' viewBox='0 0 18 18' fill='none' stroke='white' stroke-width='1.500'%3E%3Cpath d='m4.500 9 3 3.500 6-7'/%3E%3C/svg%3E") center / 18px 18px;
}

tbody.marked::after {
  inset: -5px -4px -5px -3px;
}

.person {
  display: flex;
  align-items: center;
  gap: 15px;
}

.avatar {
  display: flex;
  align-items: center;
  justify-content: center;
  width: 50px;
  height: 50px;
  border-radius: 50%;
  color: #fff;
  font-size: 19px;
  font-weight: 600;
}

.blue { background: #0078d4; }
.green { background: #498205; }
.purple { background: #8764b8; }
.forest { background: #0b6a0b; }
.orange { background: #ca5010; }
.red { background: #d13438; }

.name {
  min-height: 22px;
  margin-top: 3px;
  font-size: 17px;
  line-height: 22px;
}

.email {
  color: #505050;
  font-size: 14px;
  line-height: 20px;
}

.teams {
  width: 20px;
  height: 20px;
}

.panel-footer {
  display: flex;
  flex: none;
  gap: 10px;
}

.panel-footer button {
  font-size: 17px;
}

.panel-footer .add::after {
  inset: -15px -8px -13px;
}

/* taskbar */
.taskbar {
  display: flex;
  align-items: center;
  flex: none;
  height: 56px;
  padding-right: 25px;
  border-top: 1px solid #4b473b;
  background: #2d2817;
  color: #fff;
}

.weather {
  position: relative;
  width: 283px;
  padding-left: 28px;
}

.weather svg {
  width: 40px;
  height: 44px;
}

.weather span {
  position: absolute;
  top: 2px;
  left: 37px;
  padding: 0 4px;
  border-radius: 11px;
  background: #2c2c2c;
  font-size: 14px;
}

.start svg {
  width: 30px;
  height: 30px;
}

.task-search {
  display: flex;
  align-items: center;
  gap: 12px;
  width: 273px;
  height: 38px;
  margin-left: 17px;
  padding: 0 4px 0 14px;
  border-radius: 19px;
  background: #f3f2ef;
}

.task-search > svg:first-child {
  width: 19px;
  height: 19px;
}

.task-search .scene {
  width: 62px;
  height: 32px;
}

.apps {
  display: flex;
  gap: 5px;
  margin-left: 6px;
}

.app {
  position: relative;
  width: 50px;
  height: 50px;
  border-radius: 5px;
}

.app svg {
  width: 30px;
  height: 30px;
}

.app.active {
  background: #3d392b;
}

.app.running::after,
.app.active::after {
  content: "";
  position: absolute;
  bottom: 1px;
  left: 21px;
  width: 8px;
  height: 4px;
  border-radius: 2px;
  background: #9f9c94;
}

.app.active::after {
  left: 15px;
  width: 20px;
  background: #4cc2ff;
}

.badge {
  position: absolute;
  top: 4px;
  right: 4px;
  width: 20px;
  height: 20px;
  border-radius: 50%;
  background: #4cc2ff;
  color: #222;
  font-size: 14px;
  line-height: 20px;
}

.badge:empty {
  background: #ffc20e;
}

.tray {
  display: flex;
  align-items: center;
  margin-left: auto;
  font-size: 15px;
  line-height: 20px;
}

.w14 { width: 14px; height: 14px; margin-right: 22px; }
.w22 { width: 22px; height: 20px; margin-right: 18px; }
.w20 { width: 20px; height: 18px; margin-right: 10px; }
.w18 { width: 18px; height: 20px; }

.lang {
  margin: 0 22px 0 4px;
  text-align: center;
}

.clock {
  margin: 0 10px 0 11px;
  text-align: right;
}
</style>
